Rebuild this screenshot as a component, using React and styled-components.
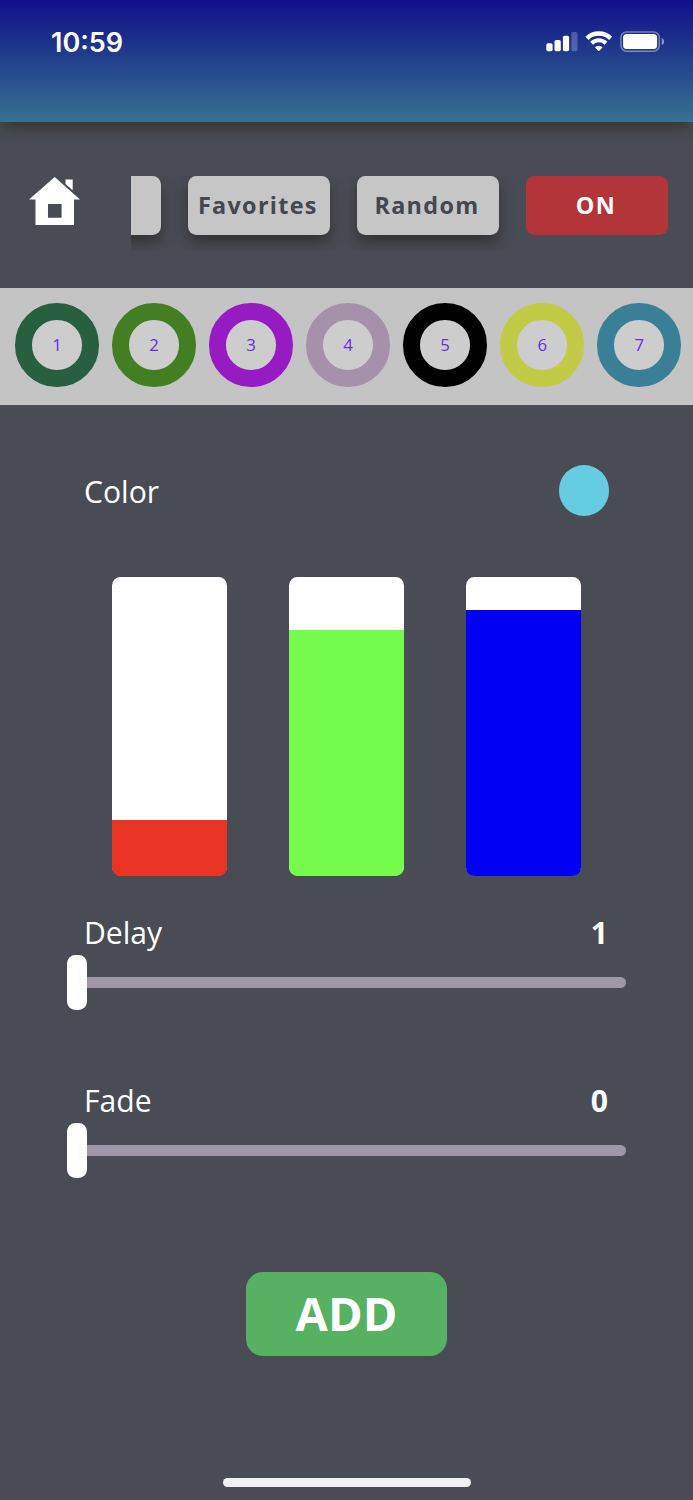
import React, { useState } from 'react';

import styled, { createGlobalStyle } from 'styled-components';

const GlobalStyle = createGlobalStyle`
  * {
    box-sizing: border-box;
  }
  body {
    margin: 0;
    background: #4a4c55;
    font-family: "Open Sans", sans-serif;
  }
`;

const Screen = styled.div`
  width: 693px;
  height: 1500px;
  background: #4a4c55;
  display: flex;
  flex-direction: column;
  overflow: hidden;
`;

const Header = styled.header`
  height: 122px;
  flex: none;
  background: linear-gradient(#10108a, #37728f);
  box-shadow: 0 8px 15px -3px rgba(40, 38, 34, 0.7);
  display: flex;
  justify-content: space-between;
  align-items: flex-start;
  padding: 24px 28px 0 51px;
`;

const Clock = styled.time`
  color: white;
  font: 600 27px/38px Inter, sans-serif;
`;

const StatusIcons = styled.svg`
  width: 119px;
  height: 24px;
  margin-top: 6px;
`;

const Nav = styled.nav`
  height: 166px;
  flex: none;
  display: flex;
  align-items: flex-start;
  padding: 54px 25px 0 29px;
`;

const HomeIcon = styled.svg`
  width: 51px;
  height: 50px;
  margin: 1px 50.5px 0 0;
  fill: white;
`;

const Tabs = styled.div`
  width: 395px;
  height: 75px;
  display: flex;
  justify-content: flex-end;
  gap: 26.8px;
  overflow: hidden;
  padding-right: 26.6px;
`;

const Button = styled.button`
  width: 142.3px;
  height: 58.6px;
  flex: none;
  border: 0;
  padding: 0 1.6px 0 0;
  border-radius: 8.4px;
  background: ${({ $on }) => ($on ? '#b33439' : '#c6c6c6')};
  color: ${({ $on }) => ($on ? 'white' : '#444650')};
  box-shadow: ${({ $on }) => ($on ? 'none' : '0 8px 14px rgba(42, 41, 38, 0.72)')};
  font: 700 23.4px/58px "Open Sans", sans-serif;
  letter-spacing: 1.3px;
  text-align: center;
`;

const Strip = styled.div`
  height: 117px;
  flex: none;
  display: flex;
  gap: 13.35px;
  padding: 15.2px 0 0 15.2px;
  background: #c4c4c4;
`;

const Ring = styled.div`
  width: 83.7px;
  height: 83.7px;
  flex: none;
  border: 17px solid ${({ $color }) => $color};
  border-radius: 50%;
  background: #cdcdcd;
  color: #6a2be0;
  font-size: 16.8px;
  line-height: 50px;
  text-align: center;
`;

const Editor = styled.main`
  display: flex;
  flex-direction: column;
  align-items: center;
`;

const Row = styled.div`
  width: 525px;
  height: 42px;
  display: flex;
  justify-content: space-between;
  align-items: flex-start;
  color: white;
  font-size: 30.1px;
  line-height: 44px;
`;

const ColorRow = styled(Row)`
  margin-top: 60px;
  height: 51px;
  line-height: 53px;
`;

const Swatch = styled.div`
  width: 50.2px;
  height: 50.2px;
  margin-top: 0.4px;
  border-radius: 50%;
  background: #66cde0;
`;

const Channels = styled.div`
  display: flex;
  gap: 61.4px;
  margin-top: 60.8px;
`;

const Channel = styled.div`
  width: 115.5px;
  height: 299.5px;
  display: flex;
  align-items: flex-end;
  border-radius: 8.4px 8.4px 10px 10px;
  background: white;
`;

const Level = styled.div`
  width: 100%;
  border-radius: 0 0 8.4px 8.4px;
  background: ${({ $color }) => $color};
`;

const Setting = styled.section`
  height: 168px;
  display: flex;
  flex-direction: column;
  align-items: center;
`;

const Settings = styled.div`
  margin-top: 35px;
`;

const Value = styled.strong`
  font-weight: 700;
  padding-right: 1px;
`;

const Slider = styled.input.attrs({ type: 'range' })`
  appearance: none;
  width: 559px;
  height: 10.4px;
  margin: 24.2px 0 0;
  border-radius: 6px;
  background: #9f97a8;

  &::-webkit-slider-thumb {
    appearance: none;
    width: 20px;
    height: 55.2px;
    border-radius: 8.4px;
    background: white;
  }
`;

const AddButton = styled.button`
  width: 201px;
  height: 84px;
  margin-top: 24.4px;
  padding: 0 0 2px;
  border: 0;
  border-radius: 17px;
  background: #56b163;
  color: white;
  font: 700 46.9px/82px "Open Sans", sans-serif;
`;

const HomeIndicator = styled.div`
  width: 248px;
  height: 8.6px;
  flex: none;
  margin: 122.3px auto 0;
  border-radius: 5px;
  background: #f0f0f0;
`;

const presets = ['#285f40', '#447e22', '#961bc2', '#a591aa', '#000000', '#c1cb46', '#397f95'];

const channels = [
  { color: '#e93323', level: 56.5 },
  { color: '#75fb4c', level: 246 },
  { color: '#0000f5', level: 266.6 },
];

const SliderSetting = ({ label, min }) => {
  const [value, setValue] = useState(min);

  return (
    <Setting>
      <Row>
        <span>{label}</span>
        <Value>{value}</Value>
      </Row>
      <Slider aria-label={label} min={min} max={100} value={value} onChange={(e) => setValue(Number(e.target.value))} />
    </Setting>
  );
};

const Status = () => (
  <StatusIcons viewBox="0 0 119 24" fill="white">
    <rect x="0.3" y="13.2" width="6.3" height="8" rx="1.7" />
    <rect x="8.5" y="9.9" width="6.3" height="11.3" rx="1.7" />
    <rect x="16.9" y="5.8" width="6.2" height="15.4" rx="1.7" />
    <rect x="25.3" y="2" width="6.2" height="19.2" rx="1.7" opacity="0.23" />
    <g fill="none" stroke="white">
      <path d="M41 8.3a16.8 16.8 0 0 1 23.6 0" strokeWidth="4.5" />
      <path d="M45.6 13.2a10.3 10.3 0 0 1 14.4 0" strokeWidth="4.1" />
    </g>
    <path d="M48.9 17.2a5.6 5.6 0 0 1 7.7 0l-3.1 3.5q-.7.7-1.4 0Z" />
    <rect x="74.9" y="2" width="38.4" height="19.2" rx="5.6" fill="none" stroke="white" strokeWidth="1.5" opacity="0.4" />
    <rect x="77.1" y="4" width="34" height="15" rx="3.5" />
    <path d="M115.8 8.1c3 1 3 6 0 7Z" opacity="0.5" />
  </StatusIcons>
);

const App = () => {
  return (
    <Screen>
      <GlobalStyle />
      <Header>
        <Clock>10:59</Clock>
        <Status />
      </Header>
      <Nav>
        <HomeIcon viewBox="0 0 51 50">
          <path fillRule="evenodd" d="M25.7 0 51 22.5H45V48H6.5V22.5H0ZM19 27V40.7H32.6V27Z" />
          <path d="M36.5 2.5h7.2v10.7l-7.2-6.2Z" />
        </HomeIcon>
        <Tabs>
          <Button aria-label="Colors" />
          <Button>Favorites</Button>
          <Button>Random</Button>
        </Tabs>
        <Button $on>ON</Button>
      </Nav>
      <Strip>
        {presets.map((color, i) => (
          <Ring key={color} $color={color}>{i + 1}</Ring>
        ))}
      </Strip>
      <Editor>
        <ColorRow>
          <span>Color</span>
          <Swatch />
        </ColorRow>
        <Channels>
          {channels.map(({ color, level }) => (
            <Channel key={color}>
              <Level $color={color} style={{ height: level }} />
            </Channel>
          ))}
        </Channels>
        <Settings>
          <SliderSetting label="Delay" min={1} />
          <SliderSetting label="Fade" min={0} />
        </Settings>
        <AddButton>ADD</AddButton>
      </Editor>
      <HomeIndicator />
    </Screen>
  );
};

export default App;
